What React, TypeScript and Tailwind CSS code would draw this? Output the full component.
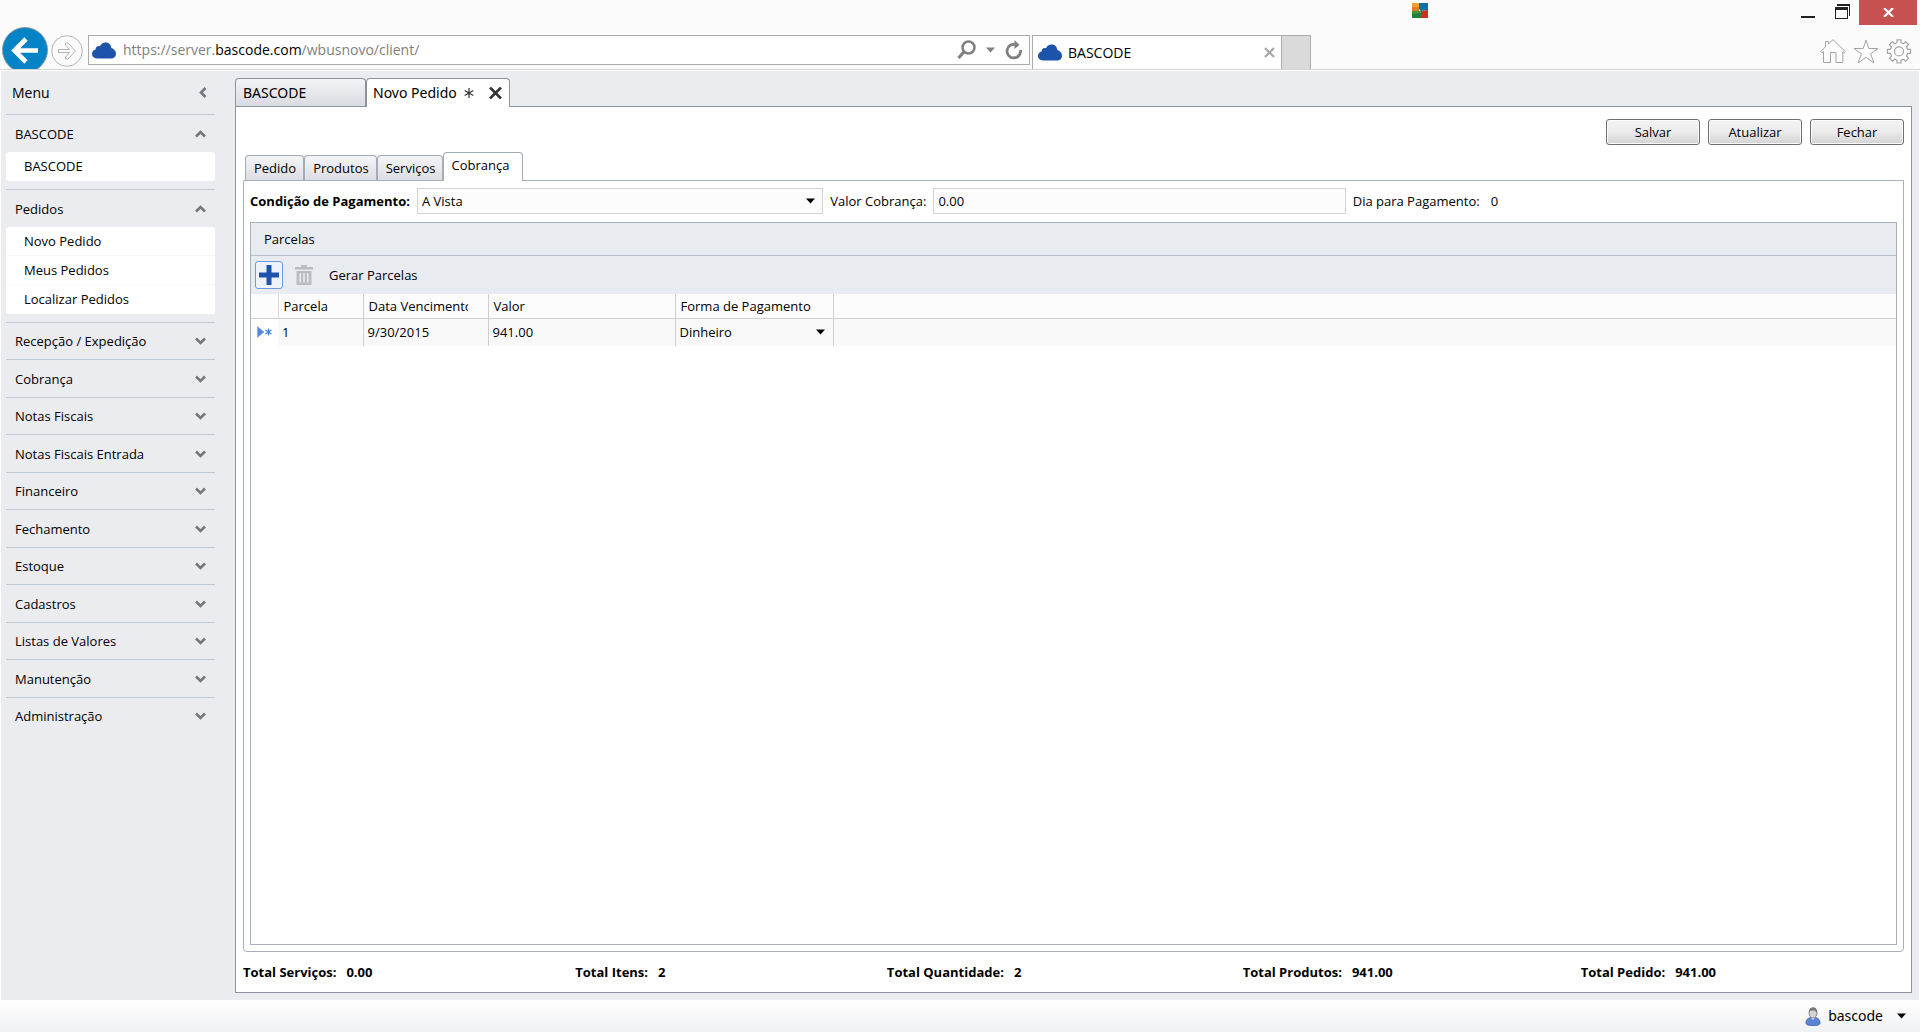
import React, { useState } from 'react';

interface Grupo {
  nome: string;
  itens: string[];
}

const grupos: Grupo[] = [
  { nome: 'BASCODE', itens: ['BASCODE'] },
  { nome: 'Pedidos', itens: ['Novo Pedido', 'Meus Pedidos', 'Localizar Pedidos'] },
  { nome: 'Recepção / Expedição', itens: [] },
  { nome: 'Cobrança', itens: [] },
  { nome: 'Notas Fiscais', itens: [] },
  { nome: 'Notas Fiscais Entrada', itens: [] },
  { nome: 'Financeiro', itens: [] },
  { nome: 'Fechamento', itens: [] },
  { nome: 'Estoque', itens: [] },
  { nome: 'Cadastros', itens: [] },
  { nome: 'Listas de Valores', itens: [] },
  { nome: 'Manutenção', itens: [] },
  { nome: 'Administração', itens: [] },
];

const totais = [
  { nome: 'Total Serviços:', valor: '0.00' },
  { nome: 'Total Itens:', valor: '2' },
  { nome: 'Total Quantidade:', valor: '2' },
  { nome: 'Total Produtos:', valor: '941.00' },
  { nome: 'Total Pedido:', valor: '941.00' },
];

function Nuvem() {
  return (
    <svg width="24" height="17" viewBox="0 0 24 17" className="shrink-0">
      <path d="M5 16.5C2 16.5 0 14.500 0 11.800C0 9.600 1.500 8 3.600 7.500C3.400 5 5.500 3.600 8 4.200C9 1.700 11 .5 13.500 .5C16.800 .5 19 2.500 19.300 6C22 6.800 24 9 24 11.900C24 14.600 22 16.500 19 16.500Z" fill="#1d53ab" />
    </svg>
  );
}

function Seta({ className }: { className?: string }) {
  return (
    <svg width="9" height="6" viewBox="0 0 9 6" className={className}>
      <path d="M0 0.500H9L4.500 5.500Z" fill="currentColor" />
    </svg>
  );
}

function Divisa({ aberto }: { aberto: boolean }) {
  return (
    <svg width="11" height="8" viewBox="0 0 11 8" fill="none" stroke="#75777b" strokeWidth="2.600">
      <path d={aberto ? 'M1 6.500L5.500 2L10 6.500' : 'M1 1.500L5.500 6L10 1.500'} />
    </svg>
  );
}

function Navegador() {
  return (
    <header className="bg-[#fbfbfb] border-b border-[#d4d4d4]">
      <div className="flex h-[35px] items-start justify-end pr-[3px]">
        <svg width="16" height="16" viewBox="0 0 16 16" className="mt-[2px] mr-[367px]">
          <path d="M0 1H7V9H0Z" fill="#f0a02c" />
          <path d="M0 5H7V9H0Z" fill="#dd7a25" />
          <path d="M7 1H16V8L9 9L7 7Z" fill="#0b6fa8" />
          <path d="M0 9H9V16H0Z" fill="#3c9838" />
          <path d="M0 12L9 11V16H0Z" fill="#2a7d35" />
          <path d="M9 9L16 8V16H9Z" fill="#cf2f20" />
        </svg>
        <button aria-label="Minimizar" className="flex h-[25px] w-[26px] items-start justify-center pt-4 text-[#222]">
          <svg width="14" height="2"><path d="M0 0H14V2H0Z" fill="currentColor" /></svg>
        </button>
        <button aria-label="Restaurar" className="mr-1 ml-2 flex h-[25px] w-[26px] justify-center pt-1">
          <svg width="15" height="15" viewBox="0 0 15 15" fill="#222">
            <path d="M2 0H15V12H14V2H2Z" />
            <path d="M0 3H13V15H0ZM1 6V14H12V6Z" fillRule="evenodd" />
          </svg>
        </button>
        <button aria-label="Fechar janela" className="flex h-[25px] w-[58px] items-center justify-center bg-[#c75050]">
          <svg width="11" height="9" viewBox="0 0 11 9" stroke="#fff" strokeWidth="2.200"><path d="M1 0L10 9M10 0L1 9" /></svg>
        </button>
      </div>
      <div className="flex h-[34px]">
        <button aria-label="Voltar" className="-mt-2 h-[42px] w-[46px] ml-[2px] overflow-hidden">
          <svg width="46" height="46" viewBox="0 0 46 46">
            <circle cx="23" cy="23" r="22.500" fill="#0484c6" stroke="#8d979c" />
            <path d="M36 23.500H13M24 12L12.500 23.500L24 35" fill="none" stroke="#fff" strokeWidth="4.600" />
          </svg>
        </button>
        <button aria-label="Avançar" className="ml-[3px] h-[32px] w-[32px]">
          <svg width="32" height="32" viewBox="0 0 32 32" fill="none" stroke="#b4b4b4">
            <circle cx="16" cy="16" r="15.300" />
            <path d="M7.500 14.500H18.500L14.500 10V8H17L24.500 16L17 24H14.500V22L18.500 17.500H7.500Z" />
          </svg>
        </button>
        <div className="ml-[5px] flex h-[30px] min-w-0 basis-[942px] items-center border border-[#acacac] bg-white pl-[3px] pr-[6px] text-[#808080]">
          <Nuvem />
          <a href="#" className="ml-[7px] flex-1 text-[14px] leading-5">
            https://server.<span className="text-black">bascode.com</span>/wbusnovo/client/
          </a>
          <button aria-label="Pesquisar">
            <svg width="19" height="20" viewBox="0 0 19 20" fill="none" stroke="currentColor">
              <circle cx="11.500" cy="7.500" r="6" strokeWidth="2.500" />
              <path d="M7 12L1.500 18" strokeWidth="3.200" />
            </svg>
          </button>
          <button aria-label="Opções de pesquisa" className="mx-[10px]"><Seta /></button>
          <button aria-label="Recarregar">
            <svg width="18" height="20" viewBox="0 0 18 20" fill="none" stroke="currentColor">
              <path d="M15.500 10A6.800 6.800 0 1 1 11 4.700" strokeWidth="2.800" />
              <path d="M9.500 0L14.500 5L9.500 9Z" fill="currentColor" stroke="none" />
            </svg>
          </button>
        </div>
        <div className="ml-[2px] flex w-[250px] items-center border border-b-0 border-[#acacac] bg-white pl-[5px] pr-1">
          <Nuvem />
          <span className="ml-[6px] flex-1 text-[14px] leading-5">BASCODE</span>
          <button aria-label="Fechar aba" className="p-[2px]">
            <svg width="11" height="11" viewBox="0 0 11 11" stroke="#a6a6a6" strokeWidth="2.200"><path d="M1 1L10 10M10 1L1 10" /></svg>
          </button>
        </div>
        <button aria-label="Nova aba" className="w-[29px] border border-b-0 border-l-0 border-[#acacac] bg-[#dadada]"></button>
        <div className="ml-auto flex items-start gap-[7px] pr-2 pt-1">
          <button aria-label="Início">
            <svg width="26" height="25" viewBox="0 0 26 25" fill="#fff" stroke="#a3a3a3" strokeLinejoin="round">
              <path d="M.7 12.500L5.500 7.800V2.500H8.500V4.900L13 .7L25.300 12.500L24.300 13.800L22.800 12.600V23.500H16V13.500H10.500V23.500H3.500V12.600L1.900 13.800Z" />
            </svg>
          </button>
          <button aria-label="Favoritos">
            <svg width="26" height="25" viewBox="0 0 26 25" fill="#fff" stroke="#a3a3a3">
              <path d="M13 1L15.800 9.500H25L17.600 14.800L21 24L13 18.300L5 24L8.400 14.800L1 9.500H10.200Z" />
            </svg>
          </button>
          <button aria-label="Ferramentas">
            <svg width="26" height="25" viewBox="0 0 26 25" fill="#fff" stroke="#a3a3a3" strokeWidth="1.200">
              <path d="M11 .8H15V3.700L17.500 4.700L19.700 2.700L22.500 5.500L20.500 7.800L21.600 10.400H24.500V14.400H21.600L20.500 17L22.500 19.300L19.700 22.100L17.500 20.200L15 21.200V24H11V21.200L8.500 20.200L6.300 22.100L3.500 19.300L5.500 17L4.400 14.400H1.500V10.400H4.400L5.500 7.800L3.500 5.500L6.300 2.700L8.500 4.700L11 3.700Z" />
              <circle cx="13" cy="12.400" r="4.500" />
            </svg>
          </button>
        </div>
      </div>
    </header>
  );
}

function Menu() {
  const [abertos, setAbertos] = useState<string[]>(['BASCODE', 'Pedidos']);

  const alternar = (nome: string) => {
    if (abertos.includes(nome)) {
      setAbertos(abertos.filter((n) => n !== nome));
    } else {
      setAbertos([...abertos, nome]);
    }
  };

  return (
    <nav className="w-[209px] shrink-0">
      <div className="flex h-[43px] items-center justify-between pl-[6px] pr-2">
        <h2 className="text-[14px] leading-5">Menu</h2>
        <button aria-label="Recolher menu">
          <svg width="8" height="11" viewBox="0 0 8 11" fill="none" stroke="#75777b" strokeWidth="2.600"><path d="M6.500 1L2 5.500L6.500 10" /></svg>
        </button>
      </div>
      {grupos.map((grupo, i) => {
        const aberto = abertos.includes(grupo.nome);
        return (
          <div key={grupo.nome} className="border-t border-[#c0cbd6]">
            <button
              onClick={() => alternar(grupo.nome)}
              className={
                aberto || i % 2 === 1
                  ? 'flex h-[37px] w-full items-center justify-between px-[9px]'
                  : 'flex h-[36px] w-full items-center justify-between px-[9px]'
              }
            >
              <span>{grupo.nome}</span>
              <Divisa aberto={aberto} />
            </button>
            {aberto && grupo.itens.length > 0 && (
              <ul className="overflow-hidden rounded-[3px] mb-2">
                {grupo.itens.map((item) => (
                  <li key={item} className="border-b border-[#f6f7f9] bg-white last:border-white">
                    <a href="#" className="flex h-7 items-center pl-[18px]">{item}</a>
                  </li>
                ))}
              </ul>
            )}
          </div>
        );
      })}
    </nav>
  );
}

function Botao({ children }: { children: React.ReactNode }) {
  return (
    <button className="h-[26px] w-[94px] rounded-[3px] border border-[#707070] bg-linear-to-b from-[#f4f4f4] from-0% via-[#ebebeb] via-50% to-[#d3d3d3] shadow-[inset_0_0_0_1px_#fafafa]">
      {children}
    </button>
  );
}

function Parcelas() {
  return (
    <section className="flex flex-1 flex-col border border-[#a9b0bb] bg-white">
      <h3 className="flex h-[33px] items-center border-b border-[#b9c0c9] bg-[#e8ebf0] pl-[13px]">Parcelas</h3>
      <div className="flex h-[38px] items-center bg-[#e8ebf0] pl-1">
        <button aria-label="Adicionar" className="flex h-7 w-7 items-center justify-center rounded-[3px] border border-[#6f9be6] bg-[#eef2fa]">
          <svg width="20" height="20" viewBox="0 0 20 20"><path d="M7.500 0H12.500V7.500H20V12.500H12.500V20H7.500V12.500H0V7.500H7.500Z" fill="#1d53ab" /></svg>
        </button>
        <button aria-label="Excluir" className="ml-3">
          <svg width="18" height="20" viewBox="0 0 18 20" fill="#b9bdc1">
            <path d="M6 0H12V2H18V4.500H0V2H6Z" />
            <path d="M1.500 6H16.500V20H1.500ZM4.500 8V17.500H6V8ZM8.200 8V17.500H9.800V8ZM12 8V17.500H13.500V8Z" fillRule="evenodd" />
          </svg>
        </button>
        <button className="ml-4">Gerar Parcelas</button>
      </div>
      <table className="w-full table-fixed border-collapse text-left">
        <thead>
          <tr className="h-6 border-b border-[#cfcfcf] bg-[#fcfcfc]">
            <th className="w-[27px] border-r border-[#d8d8d8]"></th>
            <th className="w-[85px] border-r border-[#cfcfcf] pl-[5px] font-normal">Parcela</th>
            <th className="w-[125px] border-r border-[#cfcfcf] pl-[5px] pr-5 font-normal">
              <div className="overflow-hidden whitespace-nowrap">Data Vencimento</div>
            </th>
            <th className="w-[187px] border-r border-[#cfcfcf] pl-[5px] font-normal">Valor</th>
            <th className="w-[158px] border-r border-[#cfcfcf] pl-[5px] font-normal">Forma de Pagamento</th>
            <th></th>
          </tr>
        </thead>
        <tbody>
          <tr className="h-7 bg-[#f9f9f9]">
            <td className="bg-white pl-[6px]">
              <svg width="15" height="12" viewBox="0 0 15 12">
                <path d="M.5 .5L7 6L.5 11.500Z" fill="#4f86e0" stroke="#8fb1ec" />
                <path d="M11.500 2.500V9.500M8.500 4L14.500 8M14.500 4L8.500 8" stroke="#4a7ccc" strokeWidth="1.200" />
              </svg>
            </td>
            <td className="border-r border-[#cfcfcf] pl-1">1</td>
            <td className="border-r border-[#cfcfcf] pl-1">9/30/2015</td>
            <td className="border-r border-[#cfcfcf] pl-1">941.00</td>
            <td className="border-r border-[#cfcfcf]">
              <div className="relative flex items-center">
                <select aria-label="Forma de Pagamento" defaultValue="Dinheiro" className="w-full appearance-none bg-transparent pl-1">
                  <option>Dinheiro</option>
                  <option>Cheque</option>
                </select>
                <Seta className="pointer-events-none absolute right-2" />
              </div>
            </td>
            <td></td>
          </tr>
        </tbody>
      </table>
    </section>
  );
}

export default function App() {
  const [aba, setAba] = useState('Cobrança');
  const [valor, setValor] = useState('0.00');

  return (
    <div className="flex min-h-screen flex-col bg-white font-['Open_Sans','Noto_Sans',sans-serif] text-[13px] leading-[18px] text-black">
      <Navegador />
      <main className="mx-px mt-px flex flex-1 bg-[#ebecf0] pr-[7px] pb-[7px] pl-[5px]">
        <Menu />
        <div className="ml-5 flex min-w-0 flex-1 flex-col pt-[7px]">
          <div className="flex h-[28px] font-['Noto_Sans','Open_Sans',sans-serif] text-[14px] leading-5">
            <button className="w-[131px] rounded-t-[4px] border border-b-0 border-[#8e929c] bg-linear-to-b from-[#f3f4f6] to-[#d9dbe1] pl-[7px] text-left">BASCODE</button>
            <div className="z-10 -mb-px flex w-[144px] items-center rounded-t-[4px] border border-b-0 border-[#8e929c] bg-white pl-[6px] pr-[7px] pb-px">
              <button className="whitespace-nowrap">Novo Pedido</button>
              <svg width="10" height="10" viewBox="0 0 10 10" stroke="#333" strokeWidth="1.200" className="ml-[7px]"><path d="M5 0V10M.7 2.500L9.300 7.500M9.300 2.500L.7 7.500" /></svg>
              <button aria-label="Fechar Novo Pedido" className="ml-auto">
                <svg width="13" height="12" viewBox="0 0 13 12" stroke="#333" strokeWidth="2.600"><path d="M1 .5L12 11.500M12 .5L1 11.500" /></svg>
              </button>
            </div>
          </div>
          <div className="flex flex-1 flex-col border border-[#8e929c] bg-white px-[7px]">
            <div className="flex justify-end gap-2 pt-3">
              <Botao>Salvar</Botao>
              <Botao>Atualizar</Botao>
              <Botao>Fechar</Botao>
            </div>
            <div role="tablist" className="mt-[7px] flex h-7 items-end pl-[2px]">
              {['Pedido', 'Produtos', 'Serviços', 'Cobrança'].map((nome) => (
                <button
                  key={nome}
                  role="tab"
                  aria-selected={aba === nome}
                  onClick={() => setAba(nome)}
                  className={
                    aba === nome
                      ? 'z-10 -mb-px h-[29px] rounded-t-[4px] border border-b-0 border-[#a3aab8] bg-white pl-[7px] pr-[13px] pb-1'
                      : 'h-[25px] rounded-t-[4px] border border-b-0 border-[#a3aab8] bg-linear-to-b from-[#f3f4f6] to-[#dcdee4] pl-2 pr-[7px]'
                  }
                >
                  {nome}
                </button>
              ))}
            </div>
            <div className="flex flex-1 flex-col rounded-b-[4px] border border-[#a9b0bb] px-[6px] pb-[6px]">
              <form className="flex h-[41px] items-center gap-[7px] pb-px">
                <label htmlFor="condicao" className="font-bold">Condição de Pagamento:</label>
                <div className="relative flex flex-1 items-center">
                  <select id="condicao" defaultValue="A Vista" className="h-[26px] w-full appearance-none border border-[#d4d4d4] bg-[#fcfcfc] pl-1">
                    <option>A Vista</option>
                    <option>A Prazo</option>
                  </select>
                  <Seta className="pointer-events-none absolute right-2" />
                </div>
                <label htmlFor="valor">Valor Cobrança:</label>
                <input id="valor" value={valor} onChange={(e) => setValor(e.target.value)} className="h-[26px] min-w-0 flex-1 border border-[#d4d4d4] bg-[#fcfcfc] pl-1" />
                <span>Dia para Pagamento:</span>
                <span className="flex-1 pl-1">0</span>
              </form>
              <Parcelas />
            </div>
            <div className="flex h-10 items-center font-bold">
              {totais.map((total) => (
                <React.Fragment key={total.nome}>
                  <span>{total.nome}</span>
                  <span className="flex-1 pl-[10px]">{total.valor}</span>
                </React.Fragment>
              ))}
            </div>
          </div>
        </div>
      </main>
      <footer className="flex h-8 items-center justify-end bg-linear-to-b from-white to-[#f0f1f3] pr-[14px]">
        <button className="flex items-center font-['Noto_Sans','Open_Sans',sans-serif] text-[14px] leading-5">
          <svg width="16" height="19" viewBox="0 0 16 19">
            <path d="M1 16C1 12 3.500 10.500 8 10.500S15 12 15 16C15 18 12 18.500 8 18.500S1 18 1 16Z" fill="#5b83d3" stroke="#4a6cb5" />
            <path d="M6 10.500L8 13L10 10.500Z" fill="#fff" />
            <ellipse cx="8" cy="6" rx="4" ry="5" fill="#d3d3d3" stroke="#8b8b8b" />
            <path d="M4 5C4 1.500 6 .5 8.500 .5S12.500 2.500 12 6C11 5 10.500 3.500 9 3.500S5 3.500 4 5Z" fill="#77787a" />
          </svg>
          <span className="ml-[7px] mr-[14px]">bascode</span>
          <Seta />
        </button>
      </footer>
    </div>
  );
}
